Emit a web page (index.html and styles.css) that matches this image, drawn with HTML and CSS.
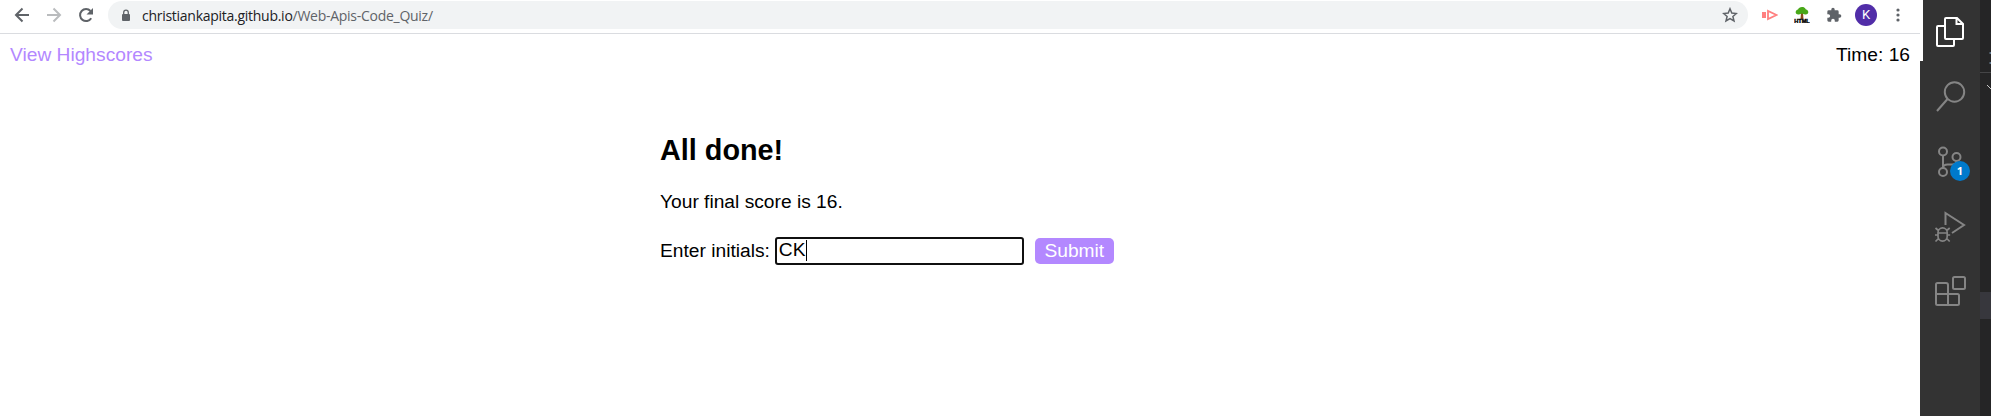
FILE: index.html
```
<!DOCTYPE html>
<html lang="en">
<head>
<meta charset="utf-8">
<title>Code Quiz</title>
<link rel="stylesheet" href="styles.css">
</head>
<body>
<div class="desktop">
  <div class="browser">
    <div class="toolbar">
      <svg class="nav" viewBox="0 0 16 16"><path d="M15 8H2M8.5 1.5 2 8l6.500 6.500"/></svg>
      <svg class="nav off" viewBox="0 0 16 16"><path d="M1 8h13M7.500 1.500 14 8l-6.500 6.500"/></svg>
      <svg class="nav" viewBox="0 0 16 16"><path d="M13.200 11.200A6 6 0 1 1 12.500 4"/><path class="fill" d="M15 1v6.500H8.500z"/></svg>
      <div class="address">
        <svg class="lock" viewBox="0 0 10 13"><rect class="fill" x="1" y="5" width="8" height="7" rx="1"/><path d="M2.700 5.500V3.500a2.300 2.300 0 0 1 4.600 0v2"/></svg>
        <span class="url">christiankapita.github.io<span class="path">/Web-Apis-Code_Quiz/</span></span>
        <svg class="star" viewBox="0 0 16 16"><path d="M8 1.800l1.800 4.300 4.600.4-3.500 3 1.100 4.500L8 11.600 4 14l1.100-4.500-3.500-3 4.600-.4z"/></svg>
      </div>
      <svg class="ext" viewBox="0 0 16 16"><path d="M0 5h4v6H0z" fill="#ff8080"/><path d="M6 4v8L14.500 8z" fill="none" stroke="#ff8080" stroke-width="1.800"/></svg>
      <svg class="ext tree" viewBox="0 0 16 16"><path d="M7 6h2l.5 6h-3z" fill="#8a4b1c"/><path d="M8 0c3 0 3.500 2 4 2.500C15 3 15.500 8 11 7.500L8 6.500 5 7.500C.5 8 1 3 4 2.500 4.500 1 6 0 8 0z" fill="#48a818"/><text x="0.200" y="15.500" textLength="15.600" lengthAdjust="spacingAndGlyphs">HTML</text></svg>
      <svg class="ext" viewBox="0 0 24 24"><path fill="#5f6368" d="M20.500 11H19V7a2 2 0 0 0-2-2h-4V3.500a2.500 2.500 0 0 0-5 0V5H4a2 2 0 0 0-2 2v3.800h1.500a2.700 2.700 0 0 1 0 5.400H2V20a2 2 0 0 0 2 2h3.800v-1.500a2.700 2.700 0 0 1 5.400 0V22H17a2 2 0 0 0 2-2v-4h1.500a2.500 2.500 0 0 0 0-5z"/></svg>
      <span class="avatar">K</span>
      <svg class="dots" viewBox="0 0 4 14"><circle cx="2" cy="2" r="1.600"/><circle cx="2" cy="7" r="1.600"/><circle cx="2" cy="12" r="1.600"/></svg>
    </div>
    <header class="top"><a class="scores">View Highscores</a><span>Time: 16</span></header>
    <main class="quiz">
      <h1>All done!</h1>
      <p>Your final score is 16.</p>
      <div class="entry"><label>Enter initials:</label><div class="field">CK<span class="caret"></span></div><button>Submit</button></div>
    </main>
  </div>
  <div class="activity">
    <svg class="tool active" viewBox="0 0 34 34"><path d="M12.500 11H5q-1 0-1 1v18q0 1 1 1h15q1 0 1-1v-6M13 3h11l6 6v14q0 1-1 1H13q-1 0-1-1V4q0-1 1-1zM23.500 3v6H30"/></svg>
    <svg class="tool" viewBox="0 0 34 34"><circle cx="21.500" cy="12" r="9.700"/><path d="M14.500 19 4 31"/></svg>
    <div class="source"><svg class="tool" viewBox="0 0 34 34"><circle cx="10" cy="6.500" r="4"/><circle cx="23.500" cy="12" r="4"/><circle cx="10" cy="27" r="4"/><path d="M10 10.500v12.500M23.500 16q0 3-4 3.500h-5q-4 0-4.500 3"/></svg><span class="badge">1</span></div>
    <svg class="tool" viewBox="0 0 34 34"><path d="M12.500 15V3L31 15 19 23"/><path class="bug" d="M5 22.500a4.600 4.600 0 0 1 9.200 0v4a4.600 4.600 0 0 1-9.200 0zM5 23h9.200M2.500 18l3.500 3M16.700 18l-3.500 3M2 25h3M14.200 25h3M2.500 31.500 6 28M16.700 31.500 13.200 28"/></svg>
    <svg class="tool" viewBox="0 0 34 34"><rect x="20" y="2" width="12" height="12" rx="1.500"/><path d="M4.500 8H13q2 0 2 2V19h9.500q1.500 0 1.500 1.500v8q0 1.500-1.500 1.500h-20Q3 30 3 28.500V9.500q0-1.500 1.500-1.500zM3 19h12v11"/></svg>
  </div>
  <div class="side"><div class="tabs"><svg viewBox="0 0 11 18"><path d="M9.500 5h2M9.500 15h2"/></svg></div><div class="tree-row"><svg viewBox="0 0 11 12"><path d="M7 2l5 5"/></svg></div><div class="selected"></div></div>
</div>
</body>
</html>
```
FILE: styles.css
```
body { margin: 0; font-family: "Liberation Sans", Arial, sans-serif; font-size: 19.2px; color: #000; }
.desktop { display: flex; height: 416px; width: 1991px; overflow: hidden; background: #333; }
.browser { width: 1920px; background: #fff; flex: none; }
.toolbar { display: flex; align-items: center; height: 34px; padding: 0 0 3px 14px; box-sizing: border-box; border-bottom: 1px solid #dadce0; }
.toolbar svg { flex: none; fill: none; }
.nav { width: 16px; height: 16px; margin-right: 16px; stroke: #5f6368; stroke-width: 2; }
.off { stroke: #babcbe; }
.toolbar .fill { fill: #5f6368; stroke: none; }
.address { display: flex; align-items: center; box-sizing: border-box; width: 1640px; height: 28px; margin-right: 14px; margin-left: -2px; padding: 0 10px 0 13px; border-radius: 14px; background: #f1f3f4; }
.lock { width: 10px; height: 13px; stroke: #5f6368; stroke-width: 1.3; }
.url { flex: 1; margin-left: 11px; font: 14px "Open Sans", "Noto Sans", sans-serif; letter-spacing: -.27px; color: #202124; white-space: nowrap; }
.path { color: #5f6368; }
.star { width: 16px; height: 16px; stroke: #5f6368; stroke-width: 1.5; }
.ext { width: 16px; height: 16px; margin-right: 16px; }
.tree text { font: bold 5.500px "Liberation Sans", sans-serif; fill: #000; stroke: #000; stroke-width: .4; }
.avatar { width: 22px; height: 22px; margin-left: -3px; border-radius: 50%; background: #512da8; color: #fff; font: 13px/22px Roboto, sans-serif; text-align: center; }
.dots { width: 4px; height: 14px; margin-left: 19px; }
.dots circle { fill: #5f6368; }
.top { display: flex; justify-content: space-between; padding: 10px 10px 0; line-height: 22px; }
.scores { color: #b388ff; }
.quiz { margin: 68px 0 0 660px; }
.quiz h1 { margin: 0; font-size: 28.8px; line-height: 33px; }
.quiz p { margin: 24px 0; line-height: 22px; }
.entry { display: flex; align-items: center; }
.field { display: flex; align-items: center; width: 249px; height: 28px; margin: 0 11px 0 5px; padding: 0 0 2px 2px; box-sizing: border-box; border: 2px solid #101010; border-radius: 3px; }
.caret { width: 1px; height: 21px; background: #000; }
.entry button { width: 79px; height: 26px; padding: 0; border: 0; border-radius: 5px; background: #b388ff; color: #fff; font: inherit; line-height: 24px; }
.activity { display: flex; flex-direction: column; align-items: center; gap: 31px; width: 60px; height: 416px; box-sizing: border-box; padding-top: 15px; flex: none; background: linear-gradient(#fff, #fff) 0 0 / 3px 61px no-repeat #333; }
.tool { display: block; width: 34px; height: 34px; flex: none; fill: none; stroke: #858585; stroke-width: 2; }
.active { stroke: #fff; }
.bug { stroke-width: 1.700; }
.source { position: relative; }
.badge { position: absolute; left: 17px; top: 16px; width: 20px; height: 20px; border-radius: 50%; background: #007acc; color: #fff; font: bold 11px/20px "Open Sans", sans-serif; text-align: center; }
.side { width: 11px; background: #252526; flex: none; }
.side svg { display: block; width: 11px; fill: none; stroke: #9cc8ee; }
.side .tree-row svg { stroke: #c5c5c5; }
.tabs { height: 73px; padding-top: 48px; box-sizing: border-box; border-bottom: 1px solid #454547; }
.tree-row { height: 209px; padding-top: 10px; }
.selected { height: 27px; background: #37373d; }
```
